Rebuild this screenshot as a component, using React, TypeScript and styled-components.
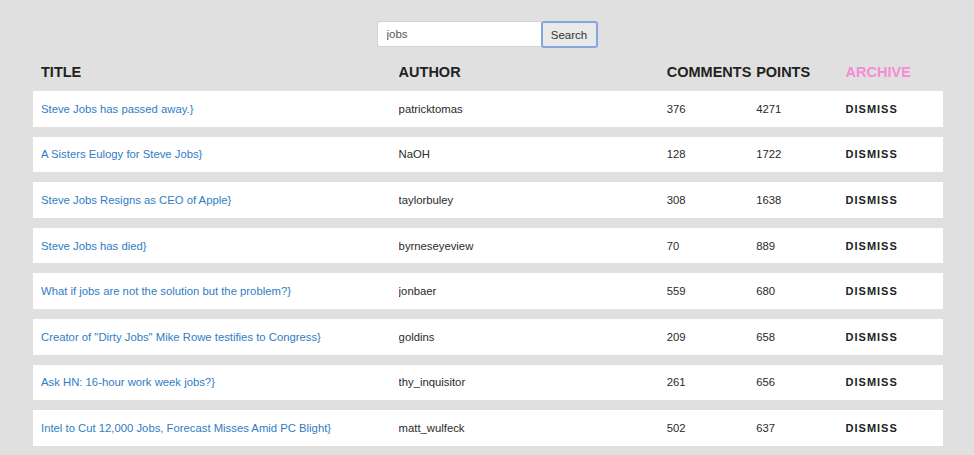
import React from 'react';
import styled, { createGlobalStyle } from 'styled-components';

const GlobalStyle = createGlobalStyle`
  html, body {
    margin: 0;
    padding: 0;
    background: #e0e0e0;
  }
  body {
    font-family: "Liberation Sans", Arial, sans-serif;
    color: #222;
  }
`;

interface Story {
  objectID: string;
  title: string;
  author: string;
  comments: number;
  points: number;
}

const stories: Story[] = [
  { objectID: '1', title: 'Steve Jobs has passed away.', author: 'patricktomas', comments: 376, points: 4271 },
  { objectID: '2', title: 'A Sisters Eulogy for Steve Jobs', author: 'NaOH', comments: 128, points: 1722 },
  { objectID: '3', title: 'Steve Jobs Resigns as CEO of Apple', author: 'taylorbuley', comments: 308, points: 1638 },
  { objectID: '4', title: 'Steve Jobs has died', author: 'byrneseyeview', comments: 70, points: 889 },
  { objectID: '5', title: 'What if jobs are not the solution but the problem?', author: 'jonbaer', comments: 559, points: 680 },
  { objectID: '6', title: 'Creator of "Dirty Jobs" Mike Rowe testifies to Congress', author: 'goldins', comments: 209, points: 658 },
  { objectID: '7', title: 'Ask HN: 16-hour work week jobs?', author: 'thy_inquisitor', comments: 261, points: 656 },
  { objectID: '8', title: 'Intel to Cut 12,000 Jobs, Forecast Misses Amid PC Blight', author: 'matt_wulfeck', comments: 502, points: 637 },
];

const Page = styled.div`
  padding-top: 21px;
  padding-bottom: 9px;
`;

const Interactions = styled.form`
  display: flex;
  justify-content: center;
  margin: 0;
`;

const SearchInput = styled.input`
  box-sizing: border-box;
  width: 164px;
  height: 26px;
  border: 1px solid #d4d4d4;
  border-right: none;
  border-radius: 3px 0 0 3px;
  background: #fff;
  padding: 0 9px;
  font-family: "Liberation Sans", Arial, sans-serif;
  font-size: 11.5px;
  color: #555;
  outline: none;
`;

const SearchButton = styled.button`
  box-sizing: border-box;
  width: 57px;
  height: 27px;
  border: 2px solid #86a6e0;
  border-radius: 3px;
  background: #e9e9e9;
  font-family: "Liberation Sans", Arial, sans-serif;
  font-size: 11.5px;
  color: #333;
  padding: 0;
  cursor: pointer;
`;

const Table = styled.div`
  width: 910px;
  margin: 12px 0 0 33px;
`;

const HeaderRow = styled.div`
  display: flex;
  line-height: 24px;
  padding: 0 8px;
  font-size: 14.5px;
  font-weight: 700;
  text-transform: uppercase;
  color: #222;
  margin-bottom: 7px;
`;

const Row = styled.div`
  display: flex;
  align-items: center;
  box-sizing: border-box;
  height: 35.6px;
  padding: 0 8px;
  background: #fff;
  font-size: 11.3px;
  color: #2a2a2a;
  white-space: nowrap;
  margin-bottom: 10px;
`;

const Cell = styled.span<{ $width: string; $tone?: 'pink' }>`
  flex: 0 0 ${(p) => p.$width};
  width: ${(p) => p.$width};
  overflow: hidden;
  color: ${(p) => (p.$tone === 'pink' ? '#f48cd6' : 'inherit')};
`;

const Link = styled.a`
  color: #2f7dc5;
  text-decoration: none;
`;

const DismissButton = styled.button`
  border: 0;
  background: transparent;
  padding: 0;
  font-family: "Liberation Sans", Arial, sans-serif;
  font-size: 11px;
  font-weight: 700;
  letter-spacing: 1px;
  color: #222;
  cursor: pointer;
`;

const App = (): JSX.Element => {
  const [query, setQuery] = React.useState('jobs');
  const [list, setList] = React.useState(stories);

  return (
    <Page>
      <GlobalStyle />
      <Interactions onSubmit={(e) => e.preventDefault()}>
        <SearchInput value={query} onChange={(e) => setQuery(e.target.value)} />
        <SearchButton type="submit">Search</SearchButton>
      </Interactions>
      <Table>
        <HeaderRow>
          <Cell $width="40%">Title</Cell>
          <Cell $width="30%">Author</Cell>
          <Cell $width="10%">Comments</Cell>
          <Cell $width="10%">Points</Cell>
          <Cell $width="10%" $tone="pink">Archive</Cell>
        </HeaderRow>
        {list.map((item) => (
          <Row key={item.objectID}>
            <Cell $width="40%">
              <Link href="#">{item.title}{'}'}</Link>
            </Cell>
            <Cell $width="30%">{item.author}</Cell>
            <Cell $width="10%">{item.comments}</Cell>
            <Cell $width="10%">{item.points}</Cell>
            <Cell $width="10%">
              <DismissButton
                type="button"
                onClick={() => setList(list.filter((s) => s.objectID !== item.objectID))}
              >
                DISMISS
              </DismissButton>
            </Cell>
          </Row>
        ))}
      </Table>
    </Page>
  );
};

export default App;
